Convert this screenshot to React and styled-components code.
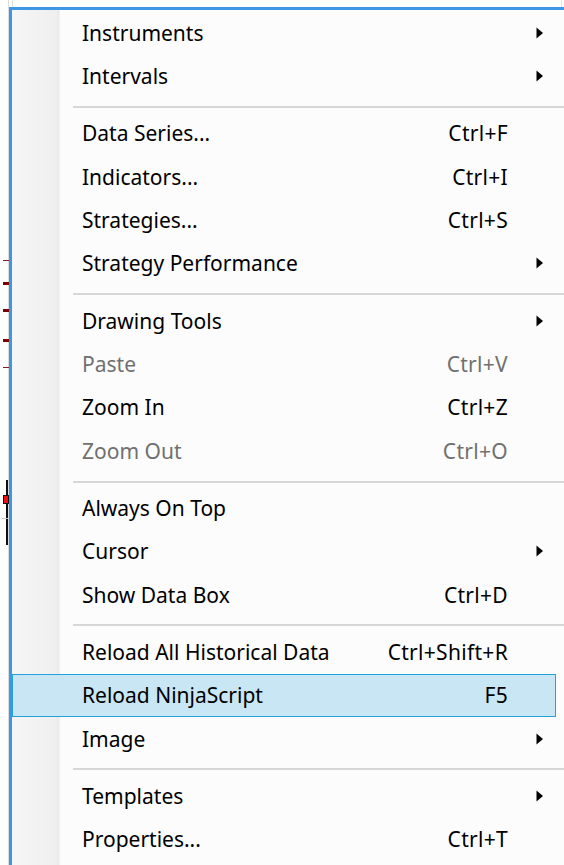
import React from "react";
import styled, { createGlobalStyle } from "styled-components";

const GlobalStyle = createGlobalStyle`
  html, body {
    margin: 0;
    padding: 0;
    background: #ffffff;
  }
`;

// chart window that sits behind the context menu
const Stage = styled.div`
  position: relative;
  width: 564px;
  height: 865px;
  overflow: hidden;
  background: #ffffff;
  font-family: "Noto Sans", "Open Sans", sans-serif;
`;

const Backdrop = styled.svg`
  position: absolute;
  left: 0;
  top: 0;
`;

// the popup itself
const Menu = styled.div`
  position: absolute;
  left: 9px;
  top: 7px;
  width: 600px;
  padding: 1px 0 40px;
  border: 3px solid #3d97e4;
  background: linear-gradient(
    to right,
    #f6f6f6 0,
    #efefef 44px,
    #e9e9e9 47px,
    #fcfcfc 48px
  );
`;

const Item = styled.div`
  display: grid;
  grid-template-columns: 70px 1fr auto 47px;
  align-items: center;
  width: 544px;
  height: 43.4px;
  box-sizing: border-box;
  color: ${p => (p.$disabled ? "#707070" : "#000000")};
  font-size: 21px;
  background: ${p => (p.$active ? "#c9e6f5" : "transparent")};
  border: 1px solid ${p => (p.$active ? "#26a0da" : "transparent")};
`;

const Label = styled.span`
  grid-column: 2;
  white-space: nowrap;
  margin-left: -1px;
`;

const Shortcut = styled.span`
  grid-column: 3;
  white-space: nowrap;
  text-align: right;
  letter-spacing: 0.3px;
`;

const Arrow = styled.span`
  grid-column: 4;
  display: flex;
  align-items: center;
  padding-left: 28px;
`;

const Divider = styled.div`
  height: 2px;
  margin: 8px 0 3.8px 61px;
  background: #d7d7d7;
`;

const ArrowIcon = () => (
  <svg width="8" height="12" viewBox="0 0 8 12">
    <path d="M0.5 0.5 L7 6 L0.5 11.5 Z" fill="#000" />
  </svg>
);

const groups = [
  [
    { label: "Instruments", sub: true },
    { label: "Intervals", sub: true },
  ],
  [
    { label: "Data Series...", key: "Ctrl+F" },
    { label: "Indicators...", key: "Ctrl+I" },
    { label: "Strategies...", key: "Ctrl+S" },
    { label: "Strategy Performance", sub: true },
  ],
  [
    { label: "Drawing Tools", sub: true },
    { label: "Paste", key: "Ctrl+V", disabled: true },
    { label: "Zoom In", key: "Ctrl+Z" },
    { label: "Zoom Out", key: "Ctrl+O", disabled: true },
  ],
  [
    { label: "Always On Top" },
    { label: "Cursor", sub: true },
    { label: "Show Data Box", key: "Ctrl+D" },
  ],
  [
    { label: "Reload All Historical Data", key: "Ctrl+Shift+R" },
    { label: "Reload NinjaScript", key: "F5", active: true },
    { label: "Image", sub: true },
  ],
  [
    { label: "Templates", sub: true },
    { label: "Properties...", key: "Ctrl+T" },
  ],
];

const ChartBits = () => (
  <Backdrop width="564" height="865">
    <line x1="8.5" y1="0" x2="8.5" y2="865" stroke="#dcdcdc" />
    <line x1="12.5" y1="0" x2="12.5" y2="7" stroke="#e4e4e4" />
    <line x1="561.5" y1="0" x2="561.5" y2="7" stroke="#e4e4e4" />
    {[260, 367].map(y => (
      <rect key={y} x="3" y={y} width="6" height="1" fill="#8b1a1a" />
    ))}
    {[282, 309, 339].map(y => (
      <rect key={y} x="3" y={y} width="6" height="3" fill="#7a0000" />
    ))}
    <rect x="6" y="480" width="2" height="65" fill="#111" />
    <rect x="3" y="495" width="6" height="9" fill="#111" />
    <rect x="4" y="496" width="4" height="7" fill="#ee1111" />
    <rect x="2" y="518" width="6" height="1" fill="#c8c8c8" />
  </Backdrop>
);

const App = () => {
  return (
    <Stage>
      <GlobalStyle />
      <ChartBits />
      <Menu>
        {groups.map((group, gi) => (
          <React.Fragment key={gi}>
            {gi > 0 && <Divider />}
            {group.map(item => (
              <Item
                key={item.label}
                $active={item.active}
                $disabled={item.disabled}
              >
                <Label>{item.label}</Label>
                {item.key && <Shortcut>{item.key}</Shortcut>}
                {item.sub && (
                  <Arrow>
                    <ArrowIcon />
                  </Arrow>
                )}
              </Item>
            ))}
          </React.Fragment>
        ))}
      </Menu>
    </Stage>
  );
};

export default App;
